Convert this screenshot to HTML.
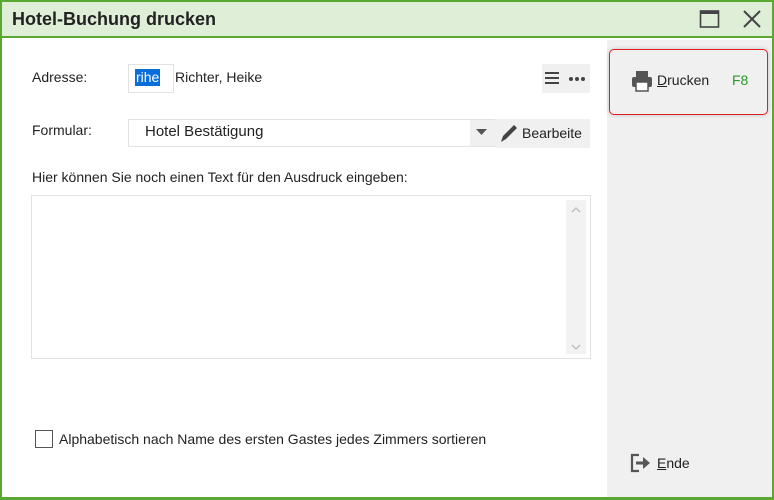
<!DOCTYPE html>
<html><head><meta charset="utf-8"><style>
*{margin:0;padding:0;box-sizing:border-box}
body{width:774px;height:500px;overflow:hidden;background:#5aa832;font-family:"Liberation Sans",sans-serif;font-size:14px;color:#222;position:relative}
#win{position:absolute;left:2px;top:2px;width:770px;height:495px;background:#fff}
#title{position:absolute;left:0;top:0;width:770px;height:36px;background:#dfeed6;border-bottom:2px solid #5aa832}
#title span{position:absolute;left:10px;top:7px;font-size:18px;font-weight:bold;color:#222}
#side{position:absolute;left:605px;top:38px;width:165px;height:457px;background:#f0f0f0}
.abs{position:absolute}
</style></head><body>
<div id="win">
<div id="title"><span>Hotel-Buchung drucken</span>
<svg class="abs" style="left:697px;top:7px" width="22" height="20"><rect x="1.5" y="2" width="18" height="16" fill="none" stroke="#444" stroke-width="1.6"/><rect x="1.5" y="2" width="18" height="3" fill="#444"/></svg>
<svg class="abs" style="left:740px;top:7px" width="20" height="20"><path d="M2 2L18 18M18 2L2 18" stroke="#444" stroke-width="2"/></svg>
</div>
<div class="abs" style="left:30px;top:67px">Adresse:</div>
<div class="abs" style="left:126px;top:62px;width:46px;height:29px;border:1px solid #e2e2e2"></div>
<div class="abs" style="left:133px;top:67px;background:#0a6ed8;color:#fff;padding:0 1px;line-height:17px">rihe</div>
<div class="abs" style="left:173px;top:67px">Richter, Heike</div>
<div class="abs" style="left:540px;top:62px;width:48px;height:29px;background:#f0f0f0"></div>
<svg class="abs" style="left:542px;top:68px" width="44" height="16"><rect x="1" y="2" width="14" height="2" fill="#444"/><rect x="1" y="7" width="14" height="2" fill="#444"/><rect x="1" y="12" width="14" height="2" fill="#444"/><circle cx="27" cy="9" r="2" fill="#444"/><circle cx="33" cy="9" r="2" fill="#444"/><circle cx="39" cy="9" r="2" fill="#444"/></svg>
<div class="abs" style="left:30px;top:120px">Formular:</div>
<div class="abs" style="left:126px;top:117px;width:368px;height:28px;border:1px solid #e2e2e2;background:#fff"></div>
<div class="abs" style="left:143px;top:121px;font-size:15px">Hotel Bestätigung</div>
<div class="abs" style="left:468px;top:118px;width:25px;height:26px;background:#f0f0f0"></div>
<svg class="abs" style="left:474px;top:126px" width="12" height="8"><path d="M0 1H11L5.5 7Z" fill="#555"/></svg>
<div class="abs" style="left:493px;top:117px;width:95px;height:29px;background:#f0f0f0"></div>
<svg class="abs" style="left:496px;top:120px" width="22" height="22"><path d="M3 20L5 14L16 3L19 6L8 17Z" fill="#444"/></svg>
<div class="abs" style="left:520px;top:123px">Bearbeite</div>
<div class="abs" style="left:30px;top:167px">Hier können Sie noch einen Text für den Ausdruck eingeben:</div>
<div class="abs" style="left:29px;top:193px;width:560px;height:164px;border:1px solid #e2e2e2"></div>
<div class="abs" style="left:564px;top:198px;width:20px;height:154px;background:#f2f2f2"></div>
<svg class="abs" style="left:568px;top:203px" width="12" height="150"><path d="M2 7L6 3L10 7" fill="none" stroke="#bbb" stroke-width="1.3"/><path d="M2 140L6 144L10 140" fill="none" stroke="#bbb" stroke-width="1.3"/></svg>
<div class="abs" style="left:33px;top:428px;width:18px;height:18px;border:1px solid #555;background:#fff"></div>
<div class="abs" style="left:57px;top:429px">Alphabetisch nach Name des ersten Gastes jedes Zimmers sortieren</div>
<div id="side"></div>
<div class="abs" style="left:607px;top:47px;width:159px;height:66px;border:1.5px solid #e02020;border-radius:5px;background:#f0f0f0;box-shadow:0 0 4px rgba(0,0,0,.2)"></div>
<svg class="abs" style="left:628px;top:67px" width="24" height="24"><rect x="6" y="2" width="12" height="6" fill="#555"/><rect x="2" y="8" width="20" height="10" rx="2" fill="#555"/><rect x="6" y="13" width="12" height="9" fill="#fff" stroke="#555" stroke-width="1.5"/></svg>
<div class="abs" style="left:655px;top:70px"><u>D</u>rucken</div>
<div class="abs" style="left:730px;top:70px;color:#2a9a2a">F8</div>
<svg class="abs" style="left:628px;top:451px" width="22" height="20"><path d="M9 2H2V18H9" fill="none" stroke="#555" stroke-width="2.2"/><rect x="6" y="8.5" width="8" height="3" fill="#555"/><path d="M13 4L20 10L13 16Z" fill="#555"/></svg>
<div class="abs" style="left:655px;top:453px"><u>E</u>nde</div>
</div>
</body></html>
